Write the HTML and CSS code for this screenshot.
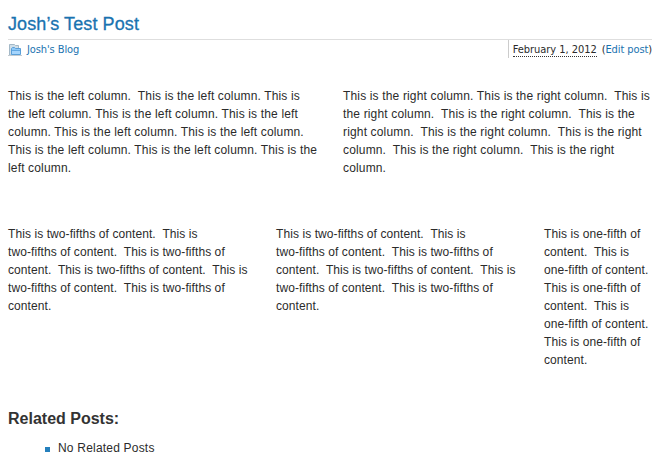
FILE: index.html
```html
<!DOCTYPE html>
<html lang="en">
<head>
<meta charset="utf-8">
<title>Josh’s Test Post</title>
<link rel="stylesheet" href="styles.css">
</head>
<body>
<article class="post">
<h1 class="title"><span>Josh’s Test Post</span></h1>
<div class="meta">
<div class="category">
<svg class="folder" width="14" height="14" viewBox="0 0 14 14">
<path d="M1.500 12V1.500h5l1 1h3V12z" fill="#cfdee8" stroke="#a3b8c7"/>
<path d="M3.500 11.500V5.500l1-1h2l1 1h5v6z" fill="#8ec9f8" stroke="#5a9fd8"/>
<path d="M4 8h8v3H4z" fill="#a5d5fd"/>
<path d="M4 7.500h8" stroke="#64a9e3"/>
<path d="M0 12.500h14" stroke="#c3cbd1"/>
</svg>
<a class="blog">Josh's Blog</a>
</div>
<div class="date"><span class="day">February 1, 2012</span><span class="edit">(<a>Edit post</a>)</span></div>
</div>
<div class="halves">
<p class="text">This is the left column.  This is the left column. This is
the left column. This is the left column. This is the left
column. This is the left column. This is the left column.
This is the left column. This is the left column. This is the
left column.</p>
<p class="text">This is the right column. This is the right column.  This is
the right column.  This is the right column.  This is the
right column.  This is the right column.  This is the right
column.  This is the right column.  This is the right
column.</p>
</div>
<div class="fifths">
<p class="text">This is two-fifths of content.  This is
two-fifths of content.  This is two-fifths of
content.  This is two-fifths of content.  This is
two-fifths of content.  This is two-fifths of
content.</p>
<p class="text">This is two-fifths of content.  This is
two-fifths of content.  This is two-fifths of
content.  This is two-fifths of content.  This is
two-fifths of content.  This is two-fifths of
content.</p>
<p class="text">This is one-fifth of
content.  This is
one-fifth of content.
This is one-fifth of
content.  This is
one-fifth of content.
This is one-fifth of
content.</p>
</div>
<h2 class="related"><span>Related Posts:</span></h2>
<ul class="list"><li><span class="none">No Related Posts</span></li></ul>
</article>
</body>
</html>
```

FILE: styles.css
```css
body {
  margin: 0;
  background: #fff;
  color: #2b2b2b;
  font: 12px/18px "Liberation Sans", Arial, sans-serif;
}
.post { padding: 12px 9px 0 8px; }
.title {
  margin: 0;
  height: 27px;
  border-bottom: 1px solid #dedede;
  color: #1a73b0;
  font-size: 18px;
  line-height: 24px;
  font-weight: 400;
  letter-spacing: 0.1px;
  -webkit-text-stroke: 0.3px #1a73b0;
}
.meta {
  display: flex;
  justify-content: space-between;
  height: 47px;
  font: 11px/18px "DejaVu Sans Condensed", "DejaVu Sans", sans-serif;
  font-stretch: condensed;
  letter-spacing: -0.1px;
}
.category { display: flex; gap: 5px; height: 20px; line-height: 20px; }
.folder { margin-top: 3px; }
a { color: #1a73b0; }
.date {
  display: flex;
  gap: 5px;
  height: 18px;
  padding-left: 4px;
  border-left: 1px solid #ccc;
  line-height: 20px;
}
.day { height: 16px; border-bottom: 1px dotted #333; letter-spacing: -0.05px; }
.halves { display: grid; grid-template-columns: 335px 1fr; height: 138px; letter-spacing: 0.155px; }
.fifths { display: grid; grid-template-columns: 268px 268px 1fr; height: 182px; letter-spacing: 0.08px; }
.text { margin: 0; white-space: pre; }
.related {
  margin: 0;
  height: 32px;
  color: #333;
  font-size: 16px;
  line-height: 24px;
}
.list { margin: 0; padding-left: 37px; list-style: none; }
.list li { display: flex; align-items: center; gap: 8px; }
.list li::before { content: ""; width: 5px; height: 5px; margin-top: 3px; background: #2580bd; }
.none { letter-spacing: 0.2px; }
```
